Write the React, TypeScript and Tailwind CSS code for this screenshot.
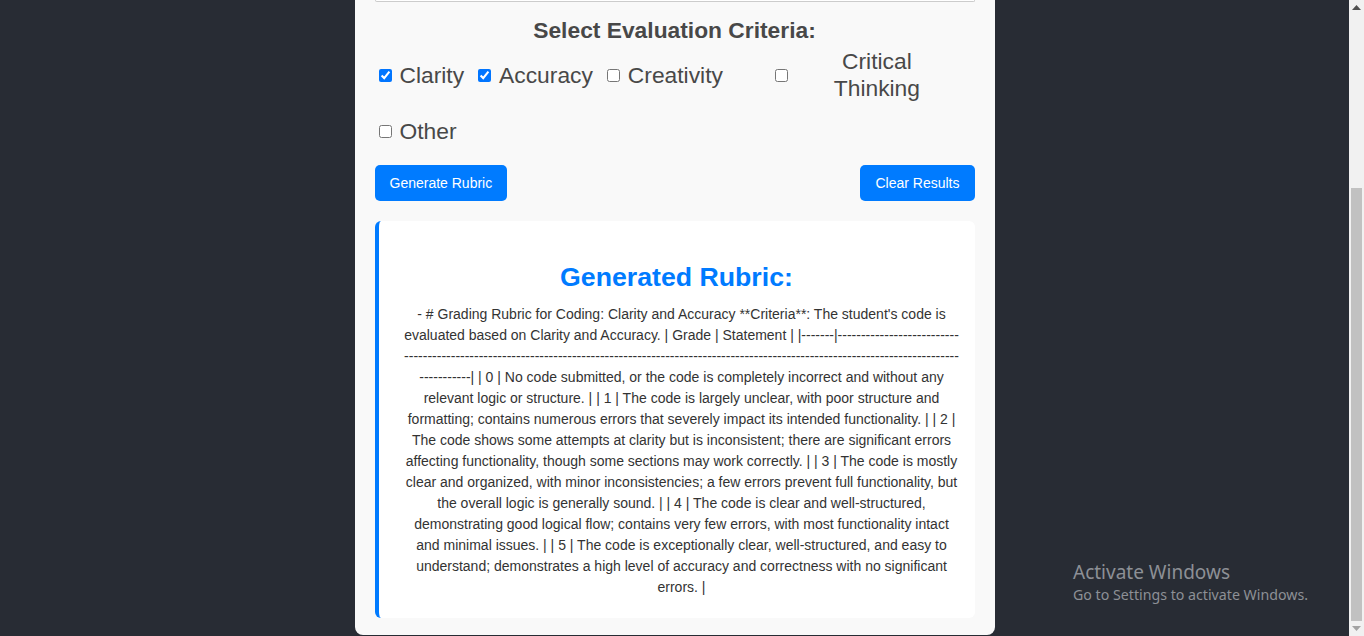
import React from "react";

const dashes = Array.from({ length: 156 }, () => "-").join("\u200B");

const rubricText =
  "- # Grading Rubric for Coding: Clarity and Accuracy **Criteria**: The student's code is evaluated based on Clarity and Accuracy. | Grade | Statement | |-------|" +
  dashes +
  "| | 0 | No code submitted, or the code is completely incorrect and without any relevant logic or structure. | | 1 | The code is largely unclear, with poor structure and formatting; contains numerous errors that severely impact its intended functionality. | | 2 | The code shows some attempts at clarity but is inconsistent; there are significant errors affecting functionality, though some sections may work correctly. | | 3 | The code is mostly clear and organized, with minor inconsistencies; a few errors prevent full functionality, but the overall logic is generally sound. | | 4 | The code is clear and well-structured, demonstrating good logical flow; contains very few errors, with most functionality intact and minimal issues. | | 5 | The code is exceptionally clear, well-structured, and easy to understand; demonstrates a high level of accuracy and correctness with no significant errors. |";

function Criterion({
  label,
  checked = false,
  className = "",
  textClass = "",
}: {
  label: string;
  checked?: boolean;
  className?: string;
  textClass?: string;
}) {
  return (
    <label className={`flex items-center ${className}`}>
      <input
        type="checkbox"
        defaultChecked={checked}
        className="ml-[4px] mr-[8px] h-[13px] w-[13px] shrink-0"
      />
      <span className={`text-[22.8px] leading-[27px] text-[#484848] ${textClass}`}>{label}</span>
    </label>
  );
}

function Scrollbar() {
  return (
    <div className="flex h-full w-[15px] shrink-0 flex-col bg-[#f1f1f1]">
      <div className="flex h-[15px] items-center justify-center">
        <svg width="9" height="5" viewBox="0 0 9 5">
          <path d="M0 5 L4.5 0 L9 5 Z" fill="#505050" />
        </svg>
      </div>
      <div className="h-[173px]" />
      <div className="mx-[2px] flex-1 bg-[#c1c1c1]" />
      <div className="flex h-[15px] items-center justify-center">
        <svg width="9" height="5" viewBox="0 0 9 5">
          <path d="M0 0 L9 0 L4.5 5 Z" fill="#a3a3a3" />
        </svg>
      </div>
    </div>
  );
}

export default function App() {
  return (
    <div
      className="relative flex h-[636px] w-full overflow-hidden bg-[#282c34]"
      style={{ fontFamily: '"Liberation Sans", Arial, sans-serif' }}
    >
      <div className="flex flex-1 justify-center">
        <div className="h-[635px] w-[640px] rounded-b-[8px] bg-[#f9f9f9] px-[20px] pb-[18px]">
          <div className="h-[2px] rounded-b-[4px] border border-t-0 border-[#ccc] bg-white" />

          <h2 className="mt-[16px] text-center text-[22.8px] font-bold leading-[25px] text-[#484848]">
            Select Evaluation Criteria:
          </h2>

          <div className="mt-[5px] flex flex-wrap items-center gap-y-[16px]">
            <Criterion label="Clarity" checked />
            <Criterion label="Accuracy" checked className="ml-[10px]" />
            <Criterion label="Creativity" className="ml-[10px]" />
            <Criterion
              label="Critical Thinking"
              className="ml-[48px]"
              textClass="ml-[6px] w-[150px] text-center"
            />
            <Criterion label="Other" />
          </div>

          <div className="mt-[20px] flex justify-between">
            <button className="h-[36px] rounded-[5px] bg-[#007bff] px-[15px] text-[14px] text-white">
              Generate Rubric
            </button>
            <button className="h-[36px] rounded-[5px] bg-[#007bff] px-[15px] text-[14px] text-white">
              Clear Results
            </button>
          </div>

          <div className="mt-[20px] h-[397px] rounded-[6px] border-l-4 border-[#007bff] bg-white pt-[40px]">
            <h2 className="px-[20px] text-center text-[26.7px] font-bold leading-[32px] text-[#007bff]">
              Generated Rubric:
            </h2>
            <p className="mt-[10.5px] pl-[25px] pr-[15px] text-center text-[14px] leading-[21px] text-[#333]">
              {rubricText}
            </p>
          </div>
        </div>
      </div>

      <Scrollbar />

      <div
        className="pointer-events-none absolute left-[1073px] top-[558px] text-[#8d9096]"
        style={{ fontFamily: '"Noto Sans", "Open Sans", sans-serif' }}
      >
        <div className="text-[19px] leading-[28px]">Activate Windows</div>
        <div className="text-[14.2px] leading-[18px]">Go to Settings to activate Windows.</div>
      </div>
    </div>
  );
}
